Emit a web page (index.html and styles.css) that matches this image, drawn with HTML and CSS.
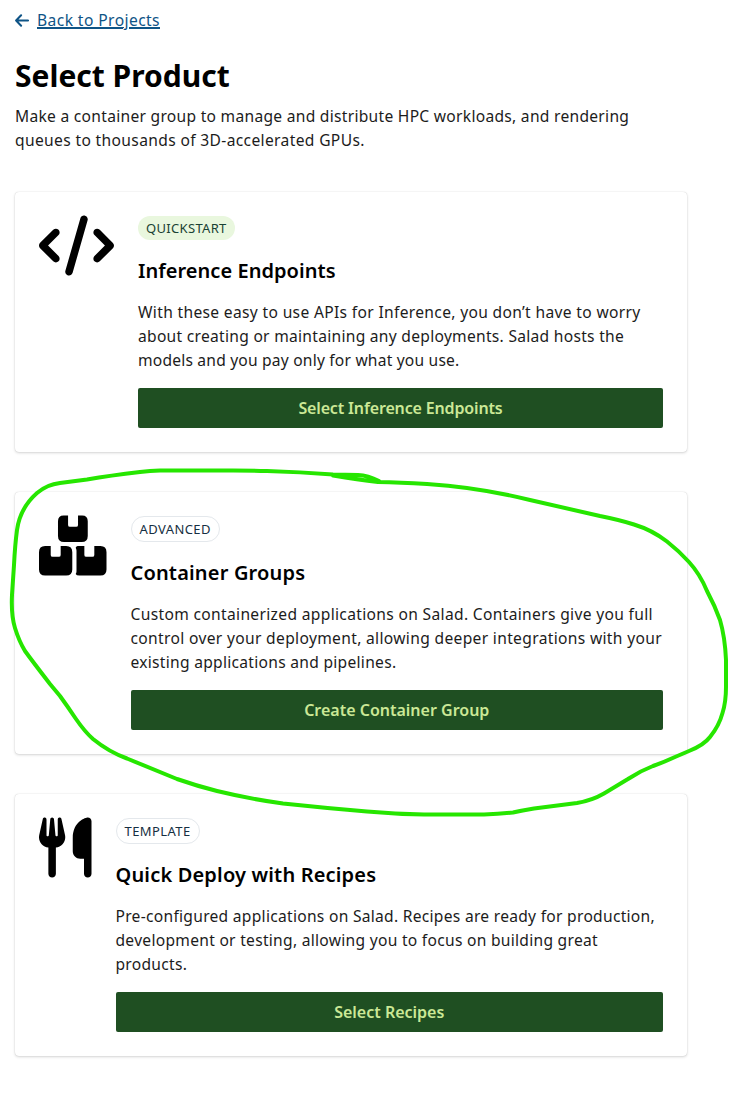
FILE: index.html
```html
<!DOCTYPE html>
<html lang="en">
<head>
<meta charset="utf-8">
<title>Select Product</title>
<link rel="stylesheet" href="styles.css">
</head>
<body>
<main class="page">
  <a class="back" href="#">
    <svg class="back-icon" width="14" height="13" viewBox="0 0 14 13"><path d="M6.1 1.2 1.1 6.5l5 5.3M1.3 6.5h11.8"/></svg>
    <span class="back-text">Back to Projects</span>
  </a>
  <h1 class="title">Select Product</h1>
  <p class="intro">Make a container group to manage and distribute HPC workloads, and rendering<br><span class="ls-wide">queues to thousands of 3D-accelerated GPUs.</span></p>

  <div class="cards">
    <section class="card">
      <svg class="icon" width="75" height="60" viewBox="0 4 640 512"><path d="M392.8 1.2c-17-4.9-34.7 5-39.6 22l-128 448c-4.9 17 5 34.7 22 39.6s34.7-5 39.6-22l128-448c4.9-17-5-34.7-22-39.6zm80.6 120.1c-12.5 12.5-12.5 32.8 0 45.3L562.7 256l-89.4 89.4c-12.5 12.5-12.5 32.8 0 45.3s32.8 12.5 45.3 0l112-112c12.5-12.5 12.5-32.8 0-45.3l-112-112c-12.5-12.5-32.8-12.5-45.3 0zm-306.7 0c-12.5-12.5-32.8-12.5-45.3 0l-112 112c-12.5 12.5-12.5 32.8 0 45.3l112 112c12.5 12.5 32.8 12.5 45.3 0s12.5-32.8 0-45.3L77.3 256l89.4-89.4c12.5-12.5 12.5-32.8 0-45.3z"/></svg>
      <div class="content">
        <span class="badge badge-green">QUICKSTART</span>
        <h2 class="heading">Inference Endpoints</h2>
        <p class="text"><span class="ls-mid">With these easy to use APIs for Inference, you don’t have to worry</span><br>about creating or maintaining any deployments. Salad hosts the<br><span class="ls-tight">models and you pay only for what you use.</span></p>
        <button class="button button-tight">Select Inference Endpoints</button>
      </div>
    </section>

    <section class="card">
      <svg class="icon" width="67.5" height="60" viewBox="0 4 576 512"><path d="M210 0h38v80q0 16 16 16h53q16 0 16-16V0h35q48 0 48 48v126q0 52-52 52H214q-52 0-52-52V48q0-48 48-48zM52 261h48v75q0 16 16 16h53q16 0 16-16v-75h47q52 0 52 52v147q0 52-52 52H52q-52 0-52-52V313q0-52 52-52zM330 261h57v75q0 16 16 16h53q16 0 16-16v-75h52q52 0 52 52v147q0 52-52 52H344q-24 0-31-14 7-8 7-22V300q0-14-7-25 5-14 17-14z"/></svg>
      <div class="content">
        <span class="badge">ADVANCED</span>
        <h2 class="heading heading-wide">Container Groups</h2>
        <p class="text"><span class="ls-mid">Custom containerized applications on Salad. Containers give you full<br>control over your deployment, allowing deeper integrations with your</span><br>existing applications and pipelines.</p>
        <button class="button">Create Container Group</button>
      </div>
    </section>

    <section class="card">
      <svg class="icon" width="52.5" height="60" viewBox="0 4 448 512"><path d="M416 0C400 0 288 32 288 176V288c0 35.3 28.7 64 64 64h32V480c0 17.7 14.3 32 32 32s32-14.3 32-32V352 240 32c0-17.7-14.3-32-32-32zM64 16C64 7.8 57.9 1 49.7 .1S34.2 4.6 32.4 12.5L2.1 148.8C.7 155.1 0 161.5 0 167.9c0 45.9 35.1 83.6 80 87.7V480c0 17.7 14.3 32 32 32s32-14.3 32-32V255.6c44.9-4.1 80-41.8 80-87.7c0-6.4-.7-12.8-2.1-19.1L191.6 12.5c-1.8-8-9.3-13.3-17.4-12.4S160 7.8 160 16V150.2c0 5.4-4.4 9.8-9.8 9.8c-5.1 0-9.3-3.9-9.8-9L127.9 14.6C127.2 6.3 120.3 0 112 0s-15.2 6.3-15.9 14.6L83.7 151c-.5 5.1-4.7 9-9.8 9c-5.4 0-9.8-4.4-9.8-9.8V16z"/></svg>
      <div class="content">
        <span class="badge">TEMPLATE</span>
        <h2 class="heading heading-wide">Quick Deploy with Recipes</h2>
        <p class="text">Pre-configured applications on Salad. Recipes are ready for production,<br>development or testing, allowing you to focus on building great<br>products.</p>
        <button class="button">Select Recipes</button>
      </div>
    </section>
  </div>
</main>
<svg class="marker" width="734" height="1113" viewBox="0 0 734 1113"><path d="M379 481Q368 475.500 358 475Q345 474.800 333 474.500Q300 472 267 471Q250 470.500 233 470.500H160Q150 470.800 140 472Q110 475.500 87 479.500L60 483Q47 484.500 37 493Q20 508 17 530Q15 545 14 565Q13 580 12 595Q11 615 15 628Q19 641 25 651Q33 662 50 684L60 696Q68 707 76 719Q85 732 93 739Q109 752 127 758.500L177 779Q197 786 217 791Q250 799 283 803.500Q325 808 367 811.500Q395 814 424 814.500H484Q500 814 513 812.500Q522 810.500 534 808.500L577 803Q592 800.500 604 793.500L628 779Q640 771 653 766Q663 762.500 675 757L689 751Q704 745 710 737Q719 726 722.500 713Q726 702 726 687V660Q725 637 720 620Q715 606 707 591Q700 574 689 562Q679 551 667 541.500Q652 530 634 524.500Q620 520 600 516L530 500Q480 487.500 427 484Q400 482.500 378 482Q358 479.500 333 475.500"/></svg>
</body>
</html>
```

FILE: styles.css
```css
* {
  box-sizing: border-box;
}

body {
  margin: 0;
  background: #fff;
  color: #1c1c1c;
  font-family: "Noto Sans", "Open Sans", sans-serif;
  font-size: 15.6px;
  line-height: 24px;
}

.page {
  width: 734px;
  height: 1113px;
  padding: 8px 47px 0 15px;
}

.back {
  display: flex;
  align-items: center;
  gap: 8px;
  height: 24px;
  color: #0f5486;
  letter-spacing: 0.42px;
}

.back-icon {
  fill: none;
  stroke: #0f5486;
  stroke-width: 2;
  stroke-linecap: round;
  stroke-linejoin: round;
}

.back-text {
  text-decoration: underline;
  text-decoration-thickness: 1px;
  text-underline-offset: 2px;
}

.title {
  margin: 24px 0 8px;
  color: #000;
  font-size: 30px;
  font-weight: 700;
  line-height: 40px;
}

.intro,
.text {
  margin: 0;
  letter-spacing: 0.28px;
  white-space: nowrap;
}

.ls-wide {
  letter-spacing: 0.35px;
}

.ls-mid {
  letter-spacing: 0.33px;
}

.ls-tight {
  letter-spacing: 0.2px;
}

.cards {
  display: flex;
  flex-direction: column;
  gap: 40px;
  margin-top: 40px;
}

.card {
  display: flex;
  align-items: flex-start;
  gap: 24px;
  padding: 24px;
  border-radius: 4px;
  background: #fff;
  box-shadow: 0 1px 3px rgba(0, 0, 0, 0.16), 0 0 1px rgba(0, 0, 0, 0.2);
}

.icon {
  flex: none;
  overflow: visible;
  fill: #000;
}

.content {
  display: flex;
  flex: 1;
  flex-direction: column;
  align-items: flex-start;
}

.badge {
  padding: 0 8px;
  border: 1px solid #e4e8ec;
  border-radius: 13px;
  color: #162f42;
  font-size: 13px;
  line-height: 24px;
  letter-spacing: 0.42px;
}

.badge-green {
  border: 0;
  background: #e9f7de;
  color: #1a4234;
  letter-spacing: 0.32px;
}

.heading {
  margin: 17px 0 15px;
  color: #000;
  font-size: 20px;
  font-weight: 600;
  line-height: 28px;
  letter-spacing: 0.05px;
}

.heading-wide {
  letter-spacing: 0.17px;
}

.button {
  width: 100%;
  height: 40px;
  margin-top: 16px;
  padding: 0;
  border: 0;
  border-radius: 2px;
  background: #1f4f22;
  color: #cbe896;
  font: 600 16px/40px "Noto Sans", "Open Sans", sans-serif;
}

.button-tight {
  letter-spacing: -0.15px;
}

/* Freehand highlight drawn over the cards */
.marker {
  position: absolute;
  top: 0;
  left: 0;
  fill: none;
  stroke: #26e600;
  stroke-width: 4;
  stroke-linecap: round;
  stroke-linejoin: round;
  pointer-events: none;
}
```
